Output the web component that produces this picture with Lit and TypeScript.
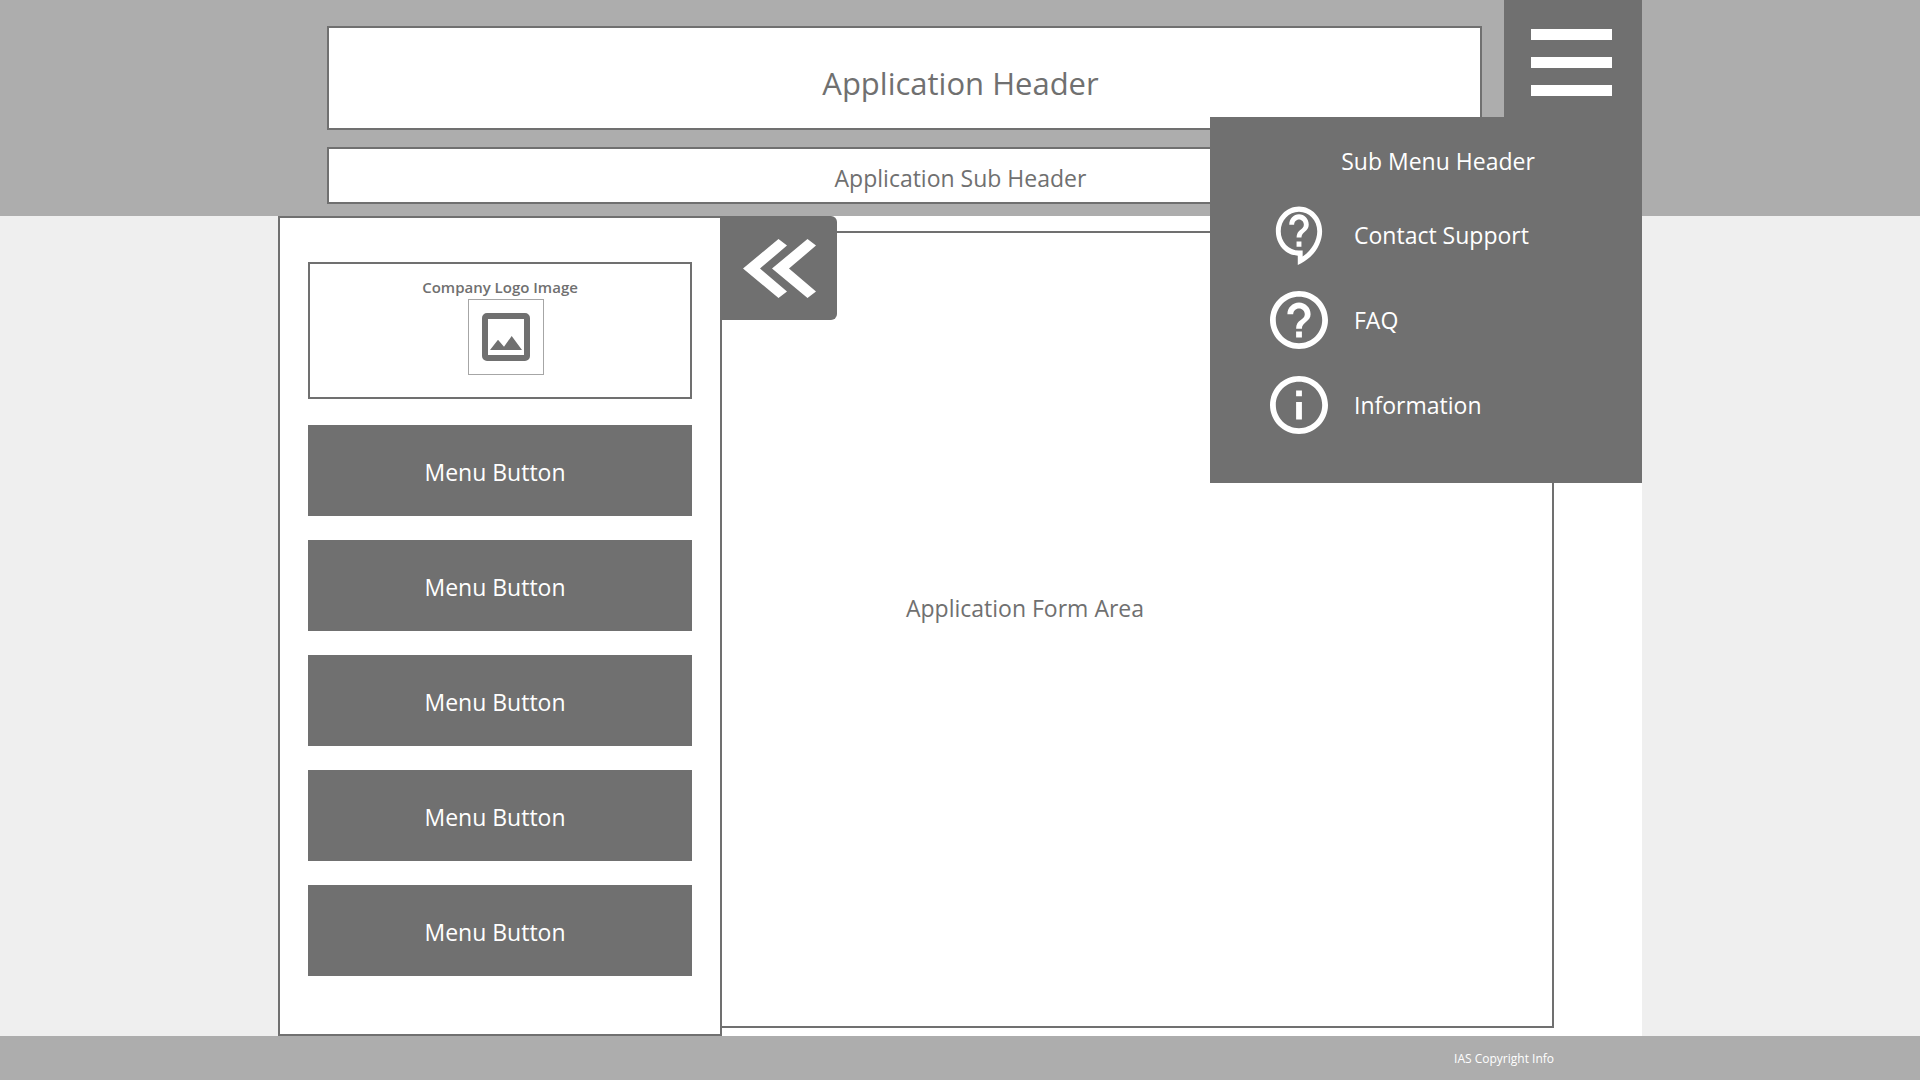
import { LitElement, html, css, svg } from "lit";
import { customElement, state } from "lit/decorators.js";

interface SubMenuItem {
  label: string;
  icon: unknown;
}

const contactIcon = html`<svg class="icon contact" viewBox="0 0 23 24" preserveAspectRatio="none" aria-hidden="true">
  ${svg`<path d="M11 23.59v-3.6c-5.01-.26-9-4.42-9-9.49C2 5.26 6.26 1 11.5 1S21 5.26 21 10.5c0 4.95-3.44 9.93-8.57 12.4l-1.43.69zM11.5 3C7.36 3 4 6.36 4 10.5S7.36 18 11.5 18H13v2.3c3.64-2.3 6-6.08 6-9.8C19 6.36 15.64 3 11.5 3zm-1 11.5h2v2h-2zm2-1.5h-2c0-3.25 3-3 3-5 0-1.1-.9-2-2-2s-2 .9-2 2h-2c0-2.21 1.79-4 4-4s4 1.79 4 4c0 2.5-3 2.75-3 5z"/>`}
</svg>`;

const faqIcon = html`<svg class="icon faq" viewBox="2 2 20 20" aria-hidden="true">
  ${svg`<path d="M11 18h2v-2h-2v2zm1-16C6.48 2 2 6.48 2 12s4.48 10 10 10 10-4.48 10-10S17.52 2 12 2zm0 18c-4.41 0-8-3.59-8-8s3.59-8 8-8 8 3.59 8 8-3.59 8-8 8zm0-14c-2.21 0-4 1.79-4 4h2c0-1.1.9-2 2-2s2 .9 2 2c0 2-3 1.75-3 5h2c0-2.25 3-2.5 3-5 0-2.21-1.79-4-4-4z"/>`}
</svg>`;

const infoIcon = html`<svg class="icon info" viewBox="2 2 20 20" aria-hidden="true">
  ${svg`<path d="M11 7h2v2h-2zm0 4h2v6h-2zm1-9C6.48 2 2 6.48 2 12s4.48 10 10 10 10-4.48 10-10S17.52 2 12 2zm0 18c-4.41 0-8-3.59-8-8s3.59-8 8-8 8 3.59 8 8-3.59 8-8 8z"/>`}
</svg>`;

@customElement("app-root")
export class AppRoot extends LitElement {
  @state() private subMenuOpen = true;

  private readonly subMenu: SubMenuItem[] = [
    { label: "Contact Support", icon: contactIcon },
    { label: "FAQ", icon: faqIcon },
    { label: "Information", icon: infoIcon },
  ];

  private readonly menu = ["Menu Button", "Menu Button", "Menu Button", "Menu Button", "Menu Button"];

  static styles = css`
    :host {
      --ink: #707070;
      --band: #adadad;
      display: grid;
      grid-template-rows: auto 1fr auto;
      min-height: 100vh;
      background: #efefef;
      color: var(--ink);
      font-family: "Segoe UI", "Open Sans", "Noto Sans", sans-serif;
      font-size: 23px;
      line-height: 32px;
    }
    * {
      box-sizing: border-box;
    }
    h1,
    h2,
    p,
    ul {
      margin: 0;
      padding: 0;
      font-weight: 400;
      font-size: 23px;
    }
    ul {
      list-style: none;
    }
    button {
      border: 0;
      padding: 0;
      background: var(--ink);
      color: #fff;
      font: inherit;
      cursor: pointer;
    }
    .band {
      background: var(--band);
    }
    .wrap {
      width: 100%;
      max-width: 1364px;
      margin: 0 auto;
    }
    .top {
      position: relative;
      z-index: 1;
      display: flex;
      align-items: flex-start;
      gap: 22px;
      padding-left: 49px;
    }
    .titles {
      flex: 1;
      display: grid;
      gap: 17px;
      padding: 26px 0 12px;
    }
    .title,
    .subtitle {
      background: #fff;
      border: 2px solid var(--ink);
      padding-left: 112px;
      text-align: center;
    }
    .title {
      padding-top: 35px;
      padding-bottom: 25px;
      font-size: 31px;
      line-height: 40px;
    }
    .subtitle {
      padding-top: 13px;
      padding-bottom: 8px;
    }
    .burger {
      display: grid;
      align-content: start;
      justify-content: center;
      gap: 17px;
      width: 138px;
      height: 117px;
      padding: 29px 4px 0 0;
    }
    .bar {
      width: 81px;
      height: 11px;
      background: #fff;
    }
    .submenu {
      position: absolute;
      top: 117px;
      right: 0;
      width: 432px;
      padding: 28px 0 36px;
      background: var(--ink);
      color: #fff;
    }
    .submenu-title {
      padding: 0 0 15px 24px;
      text-align: center;
    }
    .submenu-link {
      display: grid;
      grid-template-columns: 70px 1fr;
      align-items: center;
      gap: 20px;
      height: 85px;
      padding-left: 54px;
      color: inherit;
      text-decoration: none;
    }
    .icon {
      justify-self: center;
      fill: currentColor;
    }
    .contact {
      width: 56px;
      height: 62px;
    }
    .faq,
    .info {
      width: 58px;
      height: 58px;
    }
    .main {
      display: flex;
      background: #fff;
    }
    .side {
      width: 444px;
      padding: 44px 28px;
      border: 2px solid var(--ink);
    }
    .logo {
      display: grid;
      justify-items: center;
      align-content: start;
      height: 137px;
      margin-bottom: 26px;
      padding-top: 12px;
      border: 2px solid var(--ink);
    }
    .logo-text {
      font-size: 15px;
      line-height: 23px;
      font-weight: 600;
    }
    .logo-frame {
      display: grid;
      place-items: center;
      width: 76px;
      height: 76px;
      margin-left: 12px;
      border: 1px solid #a6a6a6;
    }
    .logo-image {
      width: 48px;
      height: 48px;
    }
    .menu {
      display: grid;
      gap: 24px;
    }
    .menu-button {
      display: block;
      width: 100%;
      height: 91px;
      padding: 3px 10px 0 0;
    }
    .content {
      position: relative;
      flex: 1;
      display: flex;
      padding: 15px 88px 8px 0;
    }
    .form-area {
      flex: 1;
      display: grid;
      place-items: center;
      padding: 0 224px 44px 0;
      border: 2px solid var(--ink);
      border-left: 0;
    }
    .collapse {
      position: absolute;
      top: 0;
      left: 0;
      display: grid;
      place-items: center;
      width: 115px;
      height: 104px;
      border-radius: 0 6px 6px 0;
    }
    .chevrons {
      width: 73px;
      height: 59px;
      fill: #fff;
    }
    .foot {
      padding: 13px 88px 11px 0;
      color: #fff;
      font-size: 12px;
      line-height: 20px;
      text-align: right;
    }
  `;

  private toggleSubMenu() {
    this.subMenuOpen = !this.subMenuOpen;
  }

  render() {
    return html`
      <header class="band">
        <div class="wrap top">
          <div class="titles">
            <h1 class="title">Application Header</h1>
            <p class="subtitle">Application Sub Header</p>
          </div>
          <button
            class="burger"
            aria-label="Sub menu"
            aria-expanded=${this.subMenuOpen ? "true" : "false"}
            @click=${this.toggleSubMenu}
          >
            <span class="bar"></span><span class="bar"></span><span class="bar"></span>
          </button>
          ${this.subMenuOpen
            ? html`<nav class="submenu" aria-labelledby="submenu-title">
                <h2 class="submenu-title" id="submenu-title">Sub Menu Header</h2>
                <ul>
                  ${this.subMenu.map(
                    (item) => html`<li>
                      <a class="submenu-link" href="#">${item.icon}<span>${item.label}</span></a>
                    </li>`
                  )}
                </ul>
              </nav>`
            : null}
        </div>
      </header>

      <div class="wrap main">
        <aside class="side">
          <div class="logo">
            <p class="logo-text">Company Logo Image</p>
            <div class="logo-frame">
              <svg class="logo-image" viewBox="0 0 48 48" aria-hidden="true">
                <path
                  fill="#707070"
                  fill-rule="evenodd"
                  d="M5 0H43A5 5 0 0 1 48 5V43A5 5 0 0 1 43 48H5A5 5 0 0 1 0 43V5A5 5 0 0 1 5 0ZM6 6V42H42V6ZM8 37L16 26.7L22 33.7L29.7 23L40 37Z"
                />
              </svg>
            </div>
          </div>
          <nav aria-label="Main">
            <ul class="menu">
              ${this.menu.map((label) => html`<li><button class="menu-button">${label}</button></li>`)}
            </ul>
          </nav>
        </aside>
        <main class="content">
          <section class="form-area"><p>Application Form Area</p></section>
          <button class="collapse" aria-label="Collapse menu">
            <svg class="chevrons" viewBox="0 0 73 58" preserveAspectRatio="none" aria-hidden="true">
              <path d="M0 29L35.5 0L44 6.5L17 29L44 51.5L35.5 58Z" />
              <path d="M29 29L64.5 0L73 6.5L46 29L73 51.5L64.5 58Z" />
            </svg>
          </button>
        </main>
      </div>

      <footer class="band">
        <div class="wrap foot">IAS Copyright Info</div>
      </footer>
    `;
  }
}
